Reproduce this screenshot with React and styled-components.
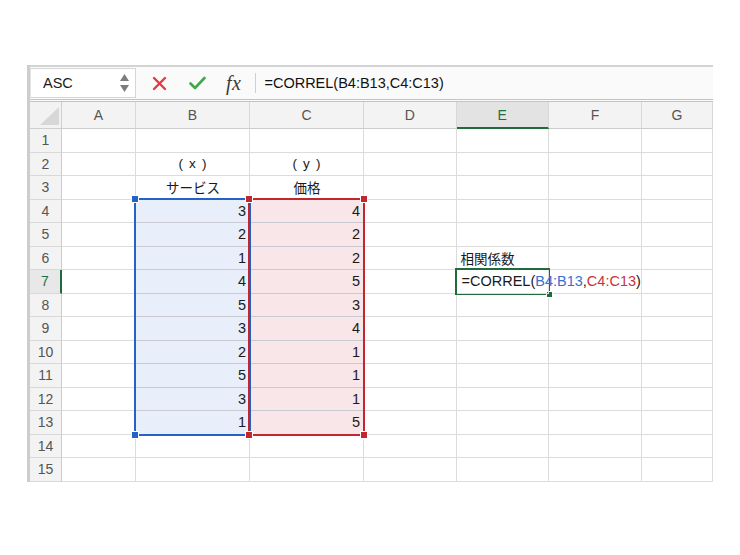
import React from "react";
import styled, { createGlobalStyle, css } from "styled-components";

const GlobalStyle = createGlobalStyle`
  html, body { margin: 0; padding: 0; background: #ffffff; }
  body { font-family: "Liberation Sans", "Noto Sans CJK JP", Arial, sans-serif; color: #1a1a1a; }
`;

const Page = styled.div`
  width: 740px;
  height: 555px;
  padding: 65px 0 0 27px;
  box-sizing: border-box;
  overflow: hidden;
`;

const Sheet = styled.div`
  width: 686px;
  border-left: 3px solid #cdcdcd;
  box-sizing: border-box;
  display: flex;
  flex-direction: column;
`;

const FormulaBar = styled.div`
  height: 37px;
  box-sizing: border-box;
  display: flex;
  align-items: stretch;
  border-top: 2px solid #d3d3d3;
  border-bottom: 3px double #c3c3c3;
  background: #fafafa;
`;

const NameBox = styled.div`
  width: 106px;
  box-sizing: border-box;
  margin: 1px 0 1px 0;
  border: 1px solid #d6d6d6;
  border-left-color: #e2e2e2;
  background: #ffffff;
  display: flex;
  align-items: center;
  justify-content: space-between;
  padding: 0 6px 0 12px;
  font-size: 14.5px;
  color: #1a1a1a;
`;

const Spinner = styled.div`
  display: flex;
  flex-direction: column;
  gap: 4px;
`;

const Actions = styled.div`
  display: flex;
  align-items: center;
  padding-left: 16px;
  gap: 22px;
`;

const FxText = styled.span`
  font-family: "Liberation Serif", "DejaVu Serif", serif;
  font-style: italic;
  font-size: 20px;
  color: #3a3a3a;
  margin-left: -2px;
  letter-spacing: 0.5px;
`;

const Separator = styled.div`
  width: 1px;
  height: 20px;
  background: #cfcfcf;
  margin-left: -8px;
`;

const FormulaText = styled.div`
  display: flex;
  align-items: center;
  padding-left: 8px;
  font-size: 14.5px;
  color: #111;
`;

const Grid = styled.div`
  display: grid;
  grid-template-columns: 32px 74px 114px 114px 92.5px 92.5px 93px 71px;
  grid-template-rows: 27px repeat(15, 23.5px);
  background: #ffffff;
  position: relative;
`;

const Corner = styled.div`
  grid-column: 1;
  grid-row: 1;
  background: #f2f2f2;
  border-right: 1px solid #cfcfcf;
  border-bottom: 1px solid #cfcfcf;
  position: relative;
  overflow: hidden;
`;

const CornerTriangle = styled.div`
  position: absolute;
  right: 2px;
  bottom: 3px;
  width: 0;
  height: 0;
  border-left: 19px solid transparent;
  border-bottom: 18px solid #d7d7d7;
`;

const ColHead = styled.div`
  grid-row: 1;
  grid-column: ${(p) => p.$c};
  background: ${(p) => (p.$active ? "#e3e3e3" : "#f3f3f3")};
  border-right: 1px solid #d8d8d8;
  border-bottom: ${(p) => (p.$active ? "2px solid #1f6b3b" : "1px solid #cccccc")};
  display: flex;
  align-items: center;
  justify-content: center;
  font-size: 14px;
  color: ${(p) => (p.$active ? "#1e7041" : "#555555")};
  box-sizing: border-box;
`;

const RowHead = styled.div`
  grid-column: 1;
  grid-row: ${(p) => p.$r};
  background: ${(p) => (p.$active ? "#e8e8e8" : "#f3f3f3")};
  border-right: ${(p) => (p.$active ? "2px solid #1f6b3b" : "1px solid #cccccc")};
  border-bottom: 1px solid #d8d8d8;
  display: flex;
  align-items: center;
  justify-content: center;
  font-size: 14px;
  color: ${(p) => (p.$active ? "#1e7041" : "#555555")};
  box-sizing: border-box;
`;

const Cell = styled.div`
  grid-column: ${(p) => p.$c};
  grid-row: ${(p) => p.$r};
  border-right: 1px solid ${(p) => (p.$fill ? "#cfd0d6" : "#dcdcdc")};
  border-bottom: 1px solid ${(p) => (p.$fill ? "#c9cad2" : "#dcdcdc")};
  background: ${(p) => p.$fill || "transparent"};
  display: flex;
  align-items: center;
  justify-content: ${(p) =>
    p.$align === "right" ? "flex-end" : p.$align === "center" ? "center" : "flex-start"};
  padding: 0 3px 0 4px;
  font-size: ${(p) => (p.$small ? "13.5px" : "14.5px")};
  letter-spacing: ${(p) => (p.$spaced ? "1.2px" : "0")};
  white-space: pre;
  overflow: visible;
  box-sizing: border-box;
  min-width: 0;
  position: relative;
  z-index: ${(p) => (p.$top ? 5 : 0)};
`;

const RangeBox = styled.div`
  grid-column: ${(p) => p.$col};
  grid-row: ${(p) => p.$rows};
  border: 2px solid ${(p) => p.$color};
  margin: -2px -1px -1px -2px;
  position: relative;
  z-index: ${(p) => p.$z};
  pointer-events: none;
`;

const Handle = styled.div`
  position: absolute;
  width: 6px;
  height: 6px;
  background: ${(p) => p.$color};
  outline: 1px solid #ffffff;
  ${(p) => (p.$v === "top" ? css`top: -4px;` : css`bottom: -4px;`)}
  ${(p) => (p.$h === "left" ? css`left: -4px;` : css`right: -4px;`)}
`;

const SelectBox = styled.div`
  grid-column: 6;
  grid-row: 8;
  border: 2px solid #1f6b3b;
  margin: -2px -1px -1px -2px;
  position: relative;
  z-index: 4;
  pointer-events: none;
`;

const FillHandle = styled.div`
  position: absolute;
  right: -4px;
  bottom: -4px;
  width: 5px;
  height: 5px;
  background: #1f6b3b;
  outline: 1px solid #ffffff;
`;

const Caret = styled.span`
  display: inline-block;
  width: 1px;
  height: 18px;
  background: #222;
  margin-right: 1px;
`;

const Ref = styled.span`
  color: ${(p) => p.$color};
`;

const cols = ["A", "B", "C", "D", "E", "F", "G"];
const xVals = [3, 2, 1, 4, 5, 3, 2, 5, 3, 1];
const yVals = [4, 2, 2, 5, 3, 4, 1, 1, 1, 5];
const BLUE_FILL = "#e8eefa";
const RED_FILL = "#f9e6e8";

function cellContent(r, c) {
  if (c === 1) {
    if (r === 2) return { text: "( x )", align: "center", small: true, spaced: true };
    if (r === 3) return { text: "サービス", align: "center", small: true };
    if (r >= 4 && r <= 13) return { text: String(xVals[r - 4]), align: "right", fill: BLUE_FILL };
  }
  if (c === 2) {
    if (r === 2) return { text: "( y )", align: "center", small: true, spaced: true };
    if (r === 3) return { text: "価格", align: "center", small: true };
    if (r >= 4 && r <= 13) return { text: String(yVals[r - 4]), align: "right", fill: RED_FILL };
  }
  if (c === 4) {
    if (r === 6) return { text: "相関係数", align: "left", small: true };
    if (r === 7)
      return {
        text: (
          <>
            <Caret />
            =CORREL(<Ref $color="#3a6fd0">B4:B13</Ref>,<Ref $color="#c8323c">C4:C13</Ref>)
          </>
        ),
        align: "left",
        top: true,
      };
  }
  return { text: "" };
}

function XIcon() {
  return (
    <svg width="15" height="15" viewBox="0 0 15 15">
      <path d="M2 2 L13 13 M13 2 L2 13" stroke="#e23b3f" strokeWidth="2.4" strokeLinecap="round" />
    </svg>
  );
}

function CheckIcon() {
  return (
    <svg width="17" height="14" viewBox="0 0 17 14">
      <path d="M1.5 7.5 L6 12 L15.5 2" stroke="#3fab48" strokeWidth="2.6" fill="none" strokeLinecap="round" strokeLinejoin="round" />
    </svg>
  );
}

function SpinArrows() {
  return (
    <Spinner>
      <svg width="9" height="7" viewBox="0 0 9 7">
        <path d="M4.5 0 L9 7 L0 7 Z" fill="#7d7d7d" />
      </svg>
      <svg width="9" height="7" viewBox="0 0 9 7">
        <path d="M0 0 L9 0 L4.5 7 Z" fill="#7d7d7d" />
      </svg>
    </Spinner>
  );
}

export default function App() {
  const rows = Array.from({ length: 15 }, (_, i) => i + 1);
  return (
    <>
      <GlobalStyle />
      <Page>
        <Sheet>
          <FormulaBar>
            <NameBox>
              <span>ASC</span>
              <SpinArrows />
            </NameBox>
            <Actions>
              <XIcon />
              <CheckIcon />
              <FxText>fx</FxText>
              <Separator />
            </Actions>
            <FormulaText>=CORREL(B4:B13,C4:C13)</FormulaText>
          </FormulaBar>
          <Grid>
            <Corner>
              <CornerTriangle />
            </Corner>
            {cols.map((c, ci) => (
              <ColHead key={c} $c={ci + 2} $active={c === "E"}>
                {c}
              </ColHead>
            ))}
            {rows.map((r) => (
              <React.Fragment key={r}>
                <RowHead $r={r + 1} $active={r === 7}>
                  {r}
                </RowHead>
                {cols.map((_, ci) => {
                  const d = cellContent(r, ci);
                  return (
                    <Cell
                      key={ci}
                      $c={ci + 2}
                      $r={r + 1}
                      $align={d.align}
                      $fill={d.fill}
                      $small={d.small}
                      $spaced={d.spaced}
                      $top={d.top}
                    >
                      {d.text}
                    </Cell>
                  );
                })}
              </React.Fragment>
            ))}
            <RangeBox $col={3} $rows="5 / 15" $color="#2462c6" $z={2}>
              <Handle $color="#2462c6" $v="top" $h="left" />
              <Handle $color="#2462c6" $v="bottom" $h="left" />
            </RangeBox>
            <RangeBox $col={4} $rows="5 / 15" $color="#c1272d" $z={3}>
              <Handle $color="#c1272d" $v="top" $h="left" />
              <Handle $color="#c1272d" $v="bottom" $h="left" />
              <Handle $color="#c1272d" $v="top" $h="right" />
              <Handle $color="#c1272d" $v="bottom" $h="right" />
            </RangeBox>
            <SelectBox>
              <FillHandle />
            </SelectBox>
          </Grid>
        </Sheet>
      </Page>
    </>
  );
}
